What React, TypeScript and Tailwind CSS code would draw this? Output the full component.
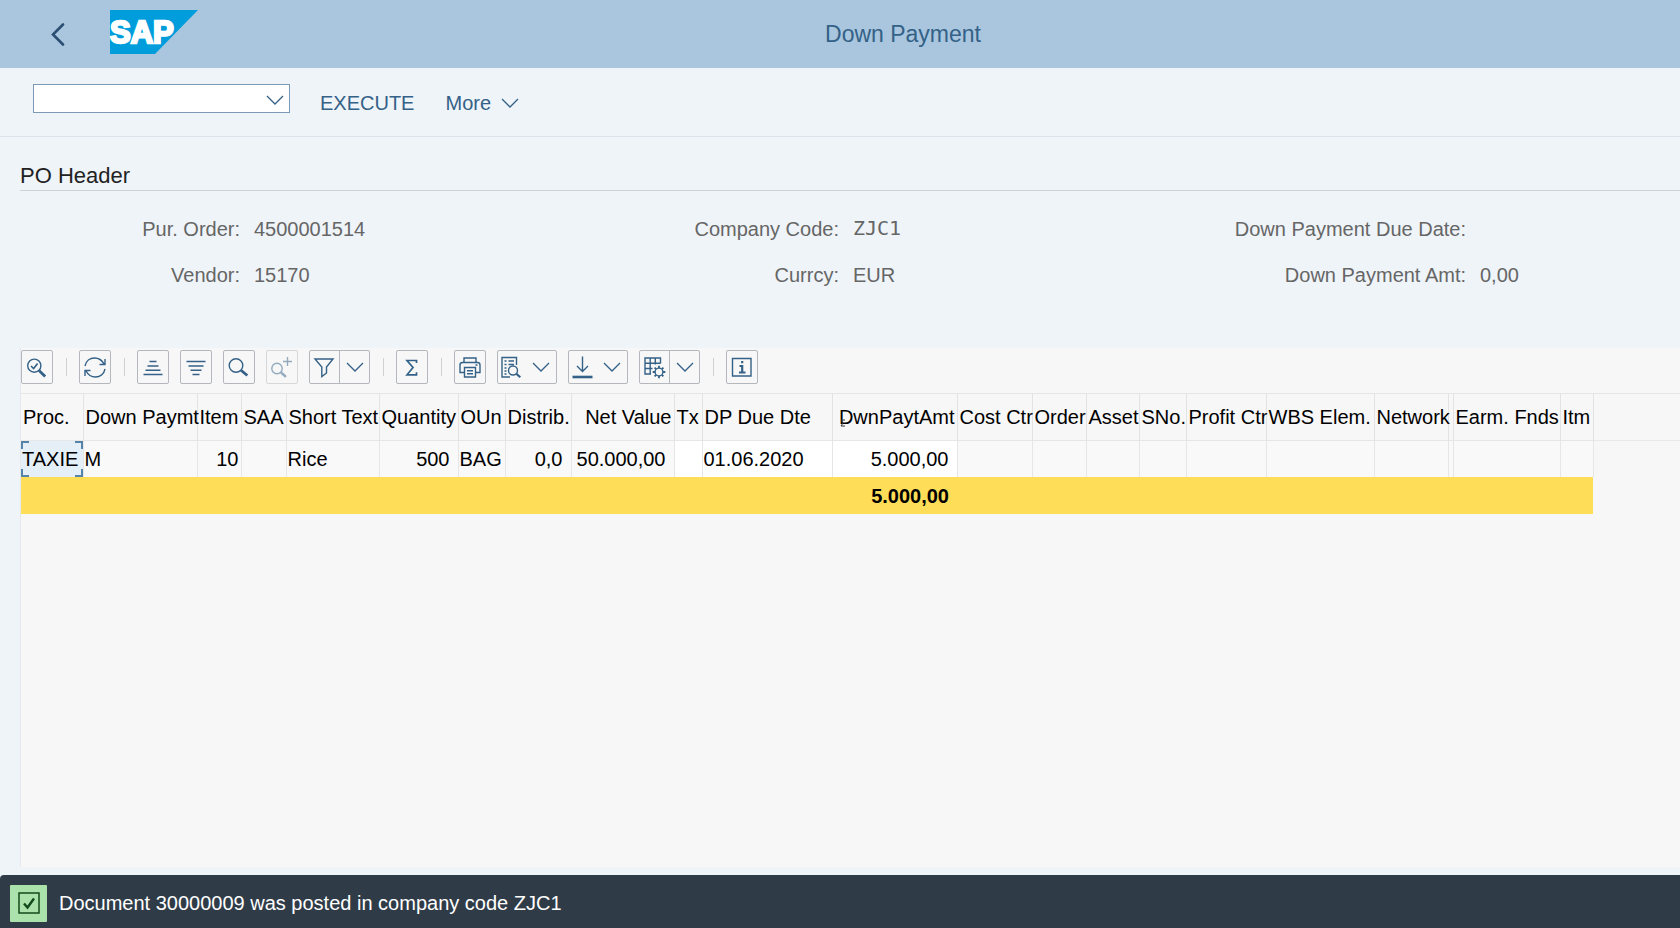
import React from 'react';

const FIELDS = [
  { id: 'purOrder', label: 'Pur. Order:', value: '4500001514' },
  { id: 'companyCode', label: 'Company Code:', value: 'ZJC1', mono: true },
  { id: 'dueDate', label: 'Down Payment Due Date:', value: '' },
  { id: 'vendor', label: 'Vendor:', value: '15170' },
  { id: 'currency', label: 'Currcy:', value: 'EUR' },
  { id: 'amount', label: 'Down Payment Amt:', value: '0,00' },
];

// label widths per form column
const LABEL_WIDTHS = ['w-[220px]', 'w-[266px]', 'w-[350px]'];

type Column = {
  name: string;
  width: string;
  value?: string;
  total?: string;
  right?: boolean;
  headRight?: boolean;
  pad?: string;
  editable?: boolean;
};

const COLUMNS: Column[] = [
  { name: 'Proc.', width: 'w-[62px]', value: 'TAXIE' },
  { name: 'Down Paymt', width: 'w-[114px]', value: 'M' },
  { name: 'Item', width: 'w-[44px]', value: '10', right: true, pad: 'pr-[2px]' },
  { name: 'SAA', width: 'w-[45px]' },
  { name: 'Short Text', width: 'w-[93px]', value: 'Rice' },
  { name: 'Quantity', width: 'w-[79px]', value: '500', right: true, pad: 'pr-[8px]' },
  { name: 'OUn', width: 'w-[47px]', value: 'BAG' },
  { name: 'Distrib.', width: 'w-[66px]', value: '0,0', right: true, pad: 'pr-[8px]' },
  { name: 'Net Value', width: 'w-[103px]', value: '50.000,00', right: true, headRight: true, pad: 'pr-[8px]' },
  { name: 'Tx', width: 'w-[28px]', editable: true },
  { name: 'DP Due Dte', width: 'w-[130px]', value: '01.06.2020', editable: true },
  { name: 'DwnPaytAmt', width: 'w-[125px]', value: '5.000,00', total: '5.000,00', right: true, headRight: true, pad: 'pr-[8px]', editable: true },
  { name: 'Cost Ctr', width: 'w-[75px]' },
  { name: 'Order', width: 'w-[54px]' },
  { name: 'Asset', width: 'w-[53px]' },
  { name: 'SNo.', width: 'w-[47px]' },
  { name: 'Profit Ctr', width: 'w-[80px]' },
  { name: 'WBS Elem.', width: 'w-[108px]' },
  { name: 'Network', width: 'w-[74px]' },
  { name: '', width: 'w-[5px]' },
  { name: 'Earm. Fnds', width: 'w-[107px]' },
  { name: 'Itm', width: 'w-[33px]' },
];

const Svg = ({ children }: { children: React.ReactNode }) => (
  <svg viewBox="0 0 24 24" fill="none" stroke="currentColor" strokeWidth="1.4" className="shrink-0 w-6 h-6" aria-hidden="true">
    {children}
  </svg>
);

const Chevron = () => (
  <svg viewBox="0 0 18 10" fill="none" stroke="currentColor" strokeWidth="1.3" className="w-[18px] h-[10px] shrink-0" aria-hidden="true">
    <path d="M1 1l8 8 8-8" />
  </svg>
);

const ICONS = {
  details: (
    <Svg>
      <circle cx="9.3" cy="10.7" r="6.6" />
      <path d="M6 11l2.6 2.5 4-5" strokeWidth="1.6" />
      <path d="M14 15.500l6.200 6" strokeWidth="2.8" />
    </Svg>
  ),
  refresh: (
    <Svg>
      <path d="M2 11C3 6 7 3 11.500 3c4 0 7.500 2.200 9.500 6M22 4v5.500h-5.500M22 14c-1 5-5 8-9.500 8-4 0-7.500-2.200-9.500-6M2 21v-5.500h5.500" />
    </Svg>
  ),
  ascending: (
    <Svg>
      <path d="M8.500 6.500h7M6.500 11h11M4.500 15.200h15M2.500 19.500h19" strokeWidth="1.6" />
    </Svg>
  ),
  descending: (
    <Svg>
      <path d="M2.500 6.500h19M4.500 11h15M6.500 15.200h11M8.500 19.500h7" strokeWidth="1.6" />
    </Svg>
  ),
  find: (
    <Svg>
      <circle cx="9" cy="10.500" r="6.800" />
      <path d="M14 15.200l6.300 5.300" strokeWidth="2.8" />
    </Svg>
  ),
  findNext: (
    <Svg>
      <circle cx="7" cy="13.500" r="5.200" />
      <path d="M11 17.500l5 4.300" strokeWidth="2.400" />
      <path d="M17.500 2v9M13 6.500h9" />
    </Svg>
  ),
  filter: (
    <Svg>
      <path d="M2 4h18l-6.500 8v6l-4.700 3.500V12z" />
    </Svg>
  ),
  sum: (
    <Svg>
      <path d="M16.500 8V5.500H7l6 7-6 7.300h9.500v-2.600" strokeWidth="1.700" />
    </Svg>
  ),
  print: (
    <Svg>
      <path d="M6 7.500V3h12v4.500M6 17.500H2V10c0-1.500 1-2.500 2.500-2.500h15C21 7.500 22 8.500 22 10v7.500h-4M6.500 12.500h11V22h-11zM9 15.700h6M9 18.700h6M17.500 10h2" />
    </Svg>
  ),
  view: (
    <Svg>
      <path d="M16.500 10V2.500H2V22h8M4.500 6h2M8.500 6h5.500M4.500 9.500h2M8.500 9.500H14M4.500 13h2M4.500 16h2M4.500 19h2" />
      <circle cx="13" cy="15.500" r="4.500" />
      <path d="M16.300 18.700l4 3.600" strokeWidth="2.2" />
    </Svg>
  ),
  download: (
    <Svg>
      <path d="M11.500 1.500v15M6 11l5.500 5.500L17 11" />
      <path d="M1.500 22h20" strokeWidth="2.6" />
    </Svg>
  ),
  layout: (
    <Svg>
      <path d="M8 19H2V3h15.500v5.500M2 8.200h15.500M2 13.500h7.500M7.200 3v16M12.300 3v6.500" />
      <circle cx="16" cy="17" r="3.900" />
      <path d="M16 10.700v2.200M16 21.100v2.200M9.700 17h2.200M20.100 17h2.200M11.600 12.600l1.500 1.500M18.900 19.900l1.500 1.500M11.600 21.400l1.500-1.500M18.900 14.100l1.500-1.500" strokeWidth="1.8" />
    </Svg>
  ),
  info: (
    <Svg>
      <path d="M2.500 3.500h18.500v17.500H2.500z" />
      <path d="M12.200 6v2.300M9.500 11h2.700v6M9 17.500h6.500" strokeWidth="2.2" />
    </Svg>
  ),
};

const box = 'h-[34px] border border-[#b4b8bc] rounded-[2px] flex items-center justify-center text-[#346187]';

const ToolButton = ({ icon, label, disabled }: { icon: keyof typeof ICONS; label: string; disabled?: boolean }) => (
  <button type="button" aria-label={label} disabled={disabled} className={`${box} w-8 disabled:opacity-50`}>
    {ICONS[icon]}
  </button>
);

const SplitButton = ({ icon, label, divided }: { icon: keyof typeof ICONS; label: string; divided?: boolean }) => (
  <div className={`${box} ${divided ? 'w-[61px]' : 'w-[60px]'}`}>
    <button type="button" aria-label={label} className={`h-full flex items-center justify-center ${divided ? 'w-[30px] border-r border-[#b4b8bc]' : 'w-[28px]'}`}>
      {ICONS[icon]}
    </button>
    <button type="button" aria-label={`${label} options`} className="flex-1 h-full flex items-center justify-center">
      <Chevron />
    </button>
  </div>
);

const Divider = () => <span className="w-px h-[18px] bg-[#cfd2d4] ml-[2px] mr-px" />;

function ShellHeader() {
  return (
    <header className="h-[68px] bg-[#a9c6de] grid grid-cols-[198px_1fr] items-center">
      <div className="flex items-center pl-[50px] pb-1">
        <button type="button" aria-label="Back" className="w-4 h-6 mt-1 text-[#2b4f73]">
          <svg viewBox="0 0 16 24" fill="none" stroke="currentColor" strokeWidth="2.6" strokeLinecap="round" className="w-4 h-6" aria-hidden="true">
            <path d="M13 2.500L3 12.500l10 10" />
          </svg>
        </button>
        <svg viewBox="0 0 88 44" className="w-[88px] h-11 ml-11 shrink-0" role="img" aria-label="SAP">
          <path d="M0 0h88L45 44H0z" fill="#009ddc" />
          <text x="0" y="33" fill="#fff" stroke="#fff" strokeWidth="2.4" fontSize="31" fontWeight="700" fontFamily="Liberation Sans, sans-serif">SAP</text>
        </svg>
      </div>
      <h1 className="text-[23px] leading-7 text-[#346187] text-center pr-[72px]">Down Payment</h1>
    </header>
  );
}

function CommandBar() {
  return (
    <div className="h-[69px] border-b border-[#dbe3ec] flex items-start pl-[33px] pt-4 text-xl text-[#346187]">
      <div className="relative w-[257px] h-[29px]">
        <select aria-label="Command" className="appearance-none w-full h-full bg-white border border-[#7b9ab8]" />
        <span className="absolute right-[6px] top-[11px] pointer-events-none"><Chevron /></span>
      </div>
      <button type="button" className="ml-[30px] mt-1 leading-[30px]">EXECUTE</button>
      <button type="button" className="ml-[31px] mt-1 leading-[30px] flex items-center gap-[10px]">
        More <Chevron />
      </button>
    </div>
  );
}

function PoHeader() {
  return (
    <section className="pl-5 pt-6 h-[211px]">
      <h2 className="text-[22px] leading-[29px] text-[#222] border-b border-[#ccd3d9]">PO Header</h2>
      <dl className="grid grid-cols-[553fr_543fr_564fr] gap-y-4 pt-[23px] text-xl leading-[30px] text-[#666]">
        {FIELDS.map((f, i) => (
          <div key={f.id} className="flex">
            <dt className={`text-right ${LABEL_WIDTHS[i % 3]}`}>{f.label}</dt>
            <dd className={`pl-[14px] ${f.mono ? "font-['DejaVu_Sans_Mono',monospace] leading-7" : ''}`}>{f.value}</dd>
          </div>
        ))}
      </dl>
    </section>
  );
}

function Toolbar() {
  return (
    <div role="toolbar" className="flex items-center gap-[11px] h-[45px] pb-[7px]">
      <ToolButton icon="details" label="Details" />
      <Divider />
      <ToolButton icon="refresh" label="Refresh" />
      <Divider />
      <ToolButton icon="ascending" label="Sort ascending" />
      <ToolButton icon="descending" label="Sort descending" />
      <ToolButton icon="find" label="Find" />
      <ToolButton icon="findNext" label="Find next" disabled />
      <SplitButton icon="filter" label="Filter" divided />
      <Divider />
      <ToolButton icon="sum" label="Total" />
      <Divider />
      <ToolButton icon="print" label="Print" />
      <SplitButton icon="view" label="Views" />
      <SplitButton icon="download" label="Export" />
      <SplitButton icon="layout" label="Layout" divided />
      <Divider />
      <ToolButton icon="info" label="Information" />
    </div>
  );
}

// Four corner brackets around the focused cell
const FocusFrame = () => (
  <span className="absolute inset-0 pointer-events-none">
    <i className="absolute left-0 top-0 w-2 h-2 border-l-2 border-t-2 border-[#5683a8]" />
    <i className="absolute right-0 top-0 w-2 h-2 border-r-2 border-t-2 border-[#5683a8]" />
    <i className="absolute left-0 bottom-0 w-2 h-2 border-l-2 border-b-2 border-[#5683a8]" />
    <i className="absolute right-0 bottom-0 w-2 h-2 border-r-2 border-b-2 border-[#5683a8]" />
  </span>
);

// Small mark on a summed column
const TotalMark = () => (
  <svg viewBox="0 0 6 8" fill="none" stroke="#333" className="absolute left-[7px] bottom-[13px] w-[6px] h-2" aria-hidden="true">
    <path d="M5 1H1l2 3-2 3h4" />
  </svg>
);

function ItemTable() {
  return (
    <div className="border-t border-[#e5e5e5] relative">
      <div className="absolute inset-x-0 top-[46px] h-px bg-[#e8e8e8]" />
      <table className="table-fixed w-[1572px] border-collapse text-xl text-black whitespace-nowrap relative">
        <thead>
          <tr className="h-[46px]">
            {COLUMNS.map((c, i) => (
              <th key={i} scope="col" className={`${c.width} relative p-0 font-normal border-r border-[#e3e3e3] ${c.headRight ? 'text-right pr-[2px]' : 'text-left pl-[2px]'}`}>
                {c.total && <TotalMark />}
                {c.name}
              </th>
            ))}
          </tr>
        </thead>
        <tbody>
          <tr className="h-[37px]">
            {COLUMNS.map((c, i) => (
              <td key={i} className={`relative p-0 border-r border-t border-[#e6e6e6] ${c.right ? 'text-right' : 'text-left pl-[1px]'} ${c.pad ?? ''} ${i === 0 ? 'bg-[#e5eff8]' : c.editable ? 'bg-white' : 'bg-[#f9f9f9]'}`}>
                {c.value}
                {i === 0 && <FocusFrame />}
              </td>
            ))}
          </tr>
          <tr className="h-[37px] bg-[#fedd58] font-bold">
            {COLUMNS.map((c, i) => (
              <td key={i} className={`p-0 ${c.right ? 'text-right' : 'text-left'} ${c.pad ?? ''}`}>{c.total}</td>
            ))}
          </tr>
        </tbody>
      </table>
    </div>
  );
}

function MessageBar() {
  return (
    <footer role="status" className="mt-2 h-[53px] bg-[#2f3c48] rounded-tl flex items-center pl-[10px] pt-[3px] gap-3 text-xl text-white">
      <span className="w-[37px] h-[37px] bg-[#abe2ab] rounded-[1px] flex items-center justify-center text-[#124a1c]">
        <svg viewBox="0 0 22 22" fill="none" stroke="currentColor" strokeWidth="1.5" className="w-[22px] h-[22px]" aria-hidden="true">
          <path d="M1 1h20v20H1z" />
          <path d="M6 11.500l3.500 4L16 6.500" strokeWidth="2.4" />
        </svg>
      </span>
      Document 30000009 was posted in company code ZJC1
    </footer>
  );
}

export default function App() {
  return (
    <div className="min-h-screen flex flex-col bg-[#eff4f9] font-['Liberation_Sans',Arial,sans-serif] overflow-hidden">
      <ShellHeader />
      <CommandBar />
      <PoHeader />
      <main className="flex-1 ml-5 border-l border-[#e5e9ed] bg-[#f7f7f7]">
        <Toolbar />
        <ItemTable />
      </main>
      <MessageBar />
    </div>
  );
}
